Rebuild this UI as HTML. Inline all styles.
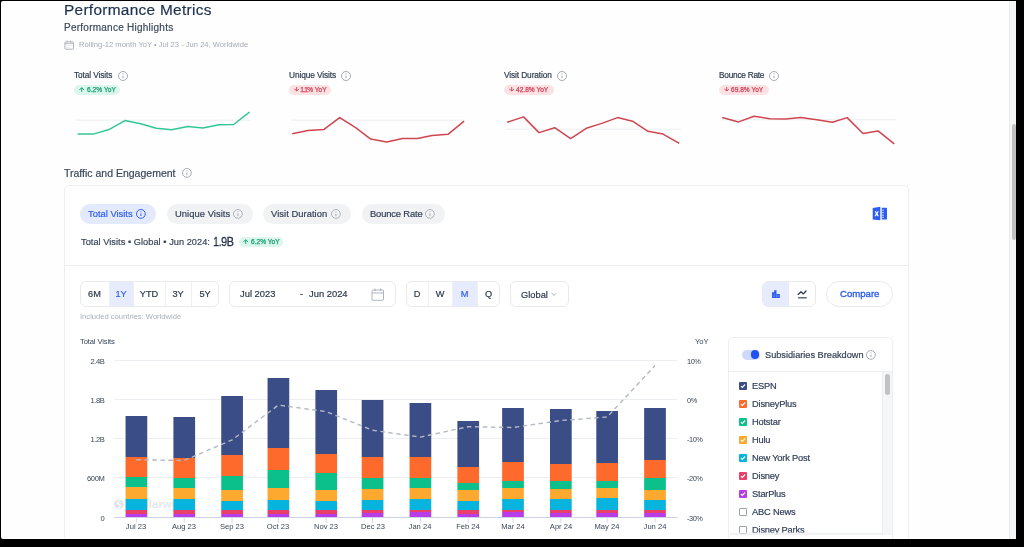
<!DOCTYPE html>
<html><head><meta charset="utf-8"><style>
html,body{margin:0;padding:0;width:1024px;height:547px;overflow:hidden;background:#000}
body{position:relative;font-family:"Liberation Sans", sans-serif}
.t{position:absolute;white-space:nowrap;font-family:"Liberation Sans", sans-serif;will-change:transform}
.r{position:absolute}
</style></head><body>
<div class="r" style="left:0.00px;top:0.00px;width:1024.00px;height:547.00px;background:#000"></div>
<div class="r" style="left:1.00px;top:1.00px;width:1015.00px;height:538.00px;background:#fefefe;border-radius:2px"></div>
<div class="r" style="left:1009.00px;top:1.00px;width:7.00px;height:538.00px;background:#f4f6f8;border-left:1px solid #e8ebee;box-sizing:border-box"></div>
<div class="r" style="left:1012.00px;top:124.00px;width:3.50px;height:116.00px;background:#c2c2c2;border-radius:2px"></div>
<div class="t" style="left:64.30px;top:-0.15px;font-size:15.4px;line-height:20.02px;color:#1d3050;font-weight:400;letter-spacing:0.3px;-webkit-text-stroke:0.2px currentColor;">Performance Metrics</div>
<div class="t" style="left:64.00px;top:20.73px;font-size:10px;line-height:13.00px;color:#3c4a5c;font-weight:400;letter-spacing:0.25px;-webkit-text-stroke:0.2px currentColor;">Performance Highlights</div>
<svg class="r" style="left:64.30px;top:39.60px" width="10" height="10" viewBox="0 0 10 10"><rect x="0.9" y="1.9" width="8.6" height="7.3" rx="0.5" fill="none" stroke="#a9b1ba" stroke-width="0.95"/><line x1="0.9" y1="3.6" x2="9.5" y2="3.6" stroke="#a9b1ba" stroke-width="0.8"/><line x1="3" y1="0.6" x2="3" y2="2.4" stroke="#a9b1ba" stroke-width="1"/><line x1="6.7" y1="0.6" x2="6.7" y2="2.4" stroke="#a9b1ba" stroke-width="1"/><g fill="#d5d9de"><rect x="2.5" y="5" width="1" height="1"/><rect x="4.5" y="5" width="1" height="1"/><rect x="6.5" y="5" width="1" height="1"/><rect x="2.5" y="7" width="1" height="1"/><rect x="4.5" y="7" width="1" height="1"/></g></svg>
<div class="t" style="left:79.30px;top:39.93px;font-size:7.6px;line-height:9.88px;color:#a3abb5;font-weight:400;letter-spacing:0px;">Rolling-12 month YoY • Jul 23 - Jun 24, Worldwide</div>
<div class="t" style="left:74.30px;top:69.83px;font-size:8.3px;line-height:10.79px;color:#2e3c4f;font-weight:400;letter-spacing:-0.1px;-webkit-text-stroke:0.2px currentColor;">Total Visits</div>
<svg class="r" style="left:117.00px;top:69.60px" width="12.0" height="12.0" viewBox="-6.0 -6.0 12.0 12.0"><circle cx="0" cy="0" r="4.5" fill="none" stroke="#9aa3ad" stroke-width="0.9"/><line x1="0" y1="-0.4" x2="0" y2="2.25" stroke="#9aa3ad" stroke-width="0.9"/><circle cx="0" cy="-2.16" r="0.55" fill="#9aa3ad"/></svg>
<div class="r" style="left:74.30px;top:84.50px;width:45.50px;height:10.20px;background:#dcf6ee;border-radius:5.1px"></div>
<svg class="r" style="left:79.00px;top:87.20px" width="5.4" height="4.8" viewBox="0 0 5.4 4.8"><line x1="2.7" y1="0.7" x2="2.7" y2="4.8" stroke="#139f72" stroke-width="0.95"/><polyline points="0.3,3.1 2.7,0.7 5.1,3.1" fill="none" stroke="#139f72" stroke-width="0.95"/></svg>
<div class="t" style="left:86.50px;top:86.02px;font-size:6.6px;line-height:8.58px;color:#139f72;font-weight:400;letter-spacing:0.05px;-webkit-text-stroke:0.25px currentColor;">6.2% YoY</div>
<div class="t" style="left:289.00px;top:69.83px;font-size:8.3px;line-height:10.79px;color:#2e3c4f;font-weight:400;letter-spacing:-0.1px;-webkit-text-stroke:0.2px currentColor;">Unique Visits</div>
<svg class="r" style="left:340.20px;top:69.60px" width="12.0" height="12.0" viewBox="-6.0 -6.0 12.0 12.0"><circle cx="0" cy="0" r="4.5" fill="none" stroke="#9aa3ad" stroke-width="0.9"/><line x1="0" y1="-0.4" x2="0" y2="2.25" stroke="#9aa3ad" stroke-width="0.9"/><circle cx="0" cy="-2.16" r="0.55" fill="#9aa3ad"/></svg>
<div class="r" style="left:289.00px;top:84.50px;width:42.00px;height:10.20px;background:#fde2e4;border-radius:5.1px"></div>
<svg class="r" style="left:293.70px;top:87.20px" width="5.4" height="4.8" viewBox="0 0 5.4 4.8"><line x1="2.7" y1="0" x2="2.7" y2="4.1" stroke="#d03f57" stroke-width="0.95"/><polyline points="0.3,1.6999999999999997 2.7,4.1 5.1,1.6999999999999997" fill="none" stroke="#d03f57" stroke-width="0.95"/></svg>
<div class="t" style="left:301.20px;top:86.02px;font-size:6.6px;line-height:8.58px;color:#d03f57;font-weight:400;letter-spacing:0px;-webkit-text-stroke:0.25px currentColor;"><span style="margin:0 -0.75px">1</span>.<span style="margin:0 -0.75px">1</span>% YoY</div>
<div class="t" style="left:504.00px;top:69.83px;font-size:8.3px;line-height:10.79px;color:#2e3c4f;font-weight:400;letter-spacing:-0.1px;-webkit-text-stroke:0.2px currentColor;">Visit Duration</div>
<svg class="r" style="left:556.20px;top:69.60px" width="12.0" height="12.0" viewBox="-6.0 -6.0 12.0 12.0"><circle cx="0" cy="0" r="4.5" fill="none" stroke="#9aa3ad" stroke-width="0.9"/><line x1="0" y1="-0.4" x2="0" y2="2.25" stroke="#9aa3ad" stroke-width="0.9"/><circle cx="0" cy="-2.16" r="0.55" fill="#9aa3ad"/></svg>
<div class="r" style="left:504.00px;top:84.50px;width:50.00px;height:10.20px;background:#fde2e4;border-radius:5.1px"></div>
<svg class="r" style="left:508.70px;top:87.20px" width="5.4" height="4.8" viewBox="0 0 5.4 4.8"><line x1="2.7" y1="0" x2="2.7" y2="4.1" stroke="#d03f57" stroke-width="0.95"/><polyline points="0.3,1.6999999999999997 2.7,4.1 5.1,1.6999999999999997" fill="none" stroke="#d03f57" stroke-width="0.95"/></svg>
<div class="t" style="left:516.20px;top:86.02px;font-size:6.6px;line-height:8.58px;color:#d03f57;font-weight:400;letter-spacing:0px;-webkit-text-stroke:0.25px currentColor;">42.8% YoY</div>
<div class="t" style="left:719.00px;top:69.83px;font-size:8.3px;line-height:10.79px;color:#2e3c4f;font-weight:400;letter-spacing:-0.25px;-webkit-text-stroke:0.2px currentColor;">Bounce Rate</div>
<svg class="r" style="left:768.00px;top:69.60px" width="12.0" height="12.0" viewBox="-6.0 -6.0 12.0 12.0"><circle cx="0" cy="0" r="4.5" fill="none" stroke="#9aa3ad" stroke-width="0.9"/><line x1="0" y1="-0.4" x2="0" y2="2.25" stroke="#9aa3ad" stroke-width="0.9"/><circle cx="0" cy="-2.16" r="0.55" fill="#9aa3ad"/></svg>
<div class="r" style="left:719.00px;top:84.50px;width:49.80px;height:10.20px;background:#fde2e4;border-radius:5.1px"></div>
<svg class="r" style="left:723.70px;top:87.20px" width="5.4" height="4.8" viewBox="0 0 5.4 4.8"><line x1="2.7" y1="0" x2="2.7" y2="4.1" stroke="#d03f57" stroke-width="0.95"/><polyline points="0.3,1.6999999999999997 2.7,4.1 5.1,1.6999999999999997" fill="none" stroke="#d03f57" stroke-width="0.95"/></svg>
<div class="t" style="left:731.20px;top:86.02px;font-size:6.6px;line-height:8.58px;color:#d03f57;font-weight:400;letter-spacing:0px;-webkit-text-stroke:0.25px currentColor;">69.8% YoY</div>
<svg class="r" style="left:0.00px;top:0.00px" width="1024" height="547" viewBox="0 0 1024 547"><line x1="76" y1="120.2" x2="250.8" y2="120.2" stroke="#eceef0" stroke-width="1"/><polyline fill="none" stroke="#33c697" stroke-width="1.5" stroke-linejoin="round" points="77.6,134.1 93.3,134.1 109.8,129.2 124.9,120.6 140.6,123.8 156.3,128.3 171.7,129.8 187.8,126.6 202.9,127.9 219,124.7 233.6,124.5 249.5,112.2"/><line x1="291.2" y1="120.2" x2="465.2" y2="120.2" stroke="#eceef0" stroke-width="1"/><polyline fill="none" stroke="#cf4650" stroke-width="1.5" stroke-linejoin="round" points="292.2,133.7 307.9,130.5 324.0,129.4 339.7,117.6 355.6,127.7 370.7,139.1 386.8,142.1 402.5,138.4 417.5,138.4 432.1,135.4 448.0,134.3 464.1,121.2"/><line x1="506.2" y1="129.2" x2="680.8" y2="129.2" stroke="#eceef0" stroke-width="1"/><polyline fill="none" stroke="#cf4650" stroke-width="1.5" stroke-linejoin="round" points="507.2,122.3 523.6,116.9 539.0,132.6 554.7,127.7 570.6,138.6 586.3,128.3 601.8,123.4 617.5,117.6 632.5,121.2 648.0,131.3 663.0,134.1 679.3,143.4"/><line x1="721.2" y1="119.7" x2="895.8" y2="119.7" stroke="#eceef0" stroke-width="1"/><polyline fill="none" stroke="#cf4650" stroke-width="1.5" stroke-linejoin="round" points="722.2,117.6 738.6,121.9 754.0,116.3 769.7,118.7 785.6,119.1 800.7,117.6 816.8,119.7 832.5,122.3 847.1,117.6 863.0,133.5 878.0,130.9 894.3,143.8"/></svg>
<div class="t" style="left:64.10px;top:166.84px;font-size:10.5px;line-height:13.65px;color:#3a4859;font-weight:400;letter-spacing:0px;-webkit-text-stroke:0.2px currentColor;">Traffic and Engagement</div>
<svg class="r" style="left:180.60px;top:167.00px" width="11.8" height="11.8" viewBox="-5.9 -5.9 11.8 11.8"><circle cx="0" cy="0" r="4.4" fill="none" stroke="#9aa3ad" stroke-width="0.9"/><line x1="0" y1="-0.4" x2="0" y2="2.20" stroke="#9aa3ad" stroke-width="0.9"/><circle cx="0" cy="-2.11" r="0.55" fill="#9aa3ad"/></svg>
<div class="r" style="left:64.00px;top:185.00px;width:845.00px;height:415.00px;border:1px solid #eceef1;border-radius:5px;background:#fff;box-sizing:border-box"></div>
<div class="r" style="left:65.00px;top:265.00px;width:843.00px;height:1.00px;background:#eceef1"></div>
<div class="r" style="left:80.00px;top:203.80px;width:76.00px;height:19.80px;background:#e4eafd;border-radius:10px"></div>
<div class="t" style="left:88.20px;top:207.93px;font-size:9.4px;line-height:12.22px;color:#2f5ef0;font-weight:400;letter-spacing:0px;-webkit-text-stroke:0.2px currentColor;">Total Visits</div>
<svg class="r" style="left:135.10px;top:208.30px" width="11.8" height="11.8" viewBox="-5.9 -5.9 11.8 11.8"><circle cx="0" cy="0" r="4.4" fill="none" stroke="#2f5ef0" stroke-width="1.0"/><line x1="0" y1="-0.4" x2="0" y2="2.20" stroke="#2f5ef0" stroke-width="1.0"/><circle cx="0" cy="-2.11" r="0.55" fill="#2f5ef0"/></svg>
<div class="r" style="left:166.70px;top:203.80px;width:86.30px;height:19.80px;background:#f1f2f4;border-radius:10px"></div>
<div class="t" style="left:174.50px;top:207.93px;font-size:9.4px;line-height:12.22px;color:#34425a;font-weight:400;letter-spacing:0.05px;-webkit-text-stroke:0.2px currentColor;">Unique Visits</div>
<svg class="r" style="left:232.10px;top:208.30px" width="11.8" height="11.8" viewBox="-5.9 -5.9 11.8 11.8"><circle cx="0" cy="0" r="4.4" fill="none" stroke="#a3abb4" stroke-width="0.9"/><line x1="0" y1="-0.4" x2="0" y2="2.20" stroke="#a3abb4" stroke-width="0.9"/><circle cx="0" cy="-2.11" r="0.55" fill="#a3abb4"/></svg>
<div class="r" style="left:263.40px;top:203.80px;width:87.90px;height:19.80px;background:#f1f2f4;border-radius:10px"></div>
<div class="t" style="left:271.20px;top:207.93px;font-size:9.4px;line-height:12.22px;color:#34425a;font-weight:400;letter-spacing:0.05px;-webkit-text-stroke:0.2px currentColor;">Visit Duration</div>
<svg class="r" style="left:330.40px;top:208.30px" width="11.8" height="11.8" viewBox="-5.9 -5.9 11.8 11.8"><circle cx="0" cy="0" r="4.4" fill="none" stroke="#a3abb4" stroke-width="0.9"/><line x1="0" y1="-0.4" x2="0" y2="2.20" stroke="#a3abb4" stroke-width="0.9"/><circle cx="0" cy="-2.11" r="0.55" fill="#a3abb4"/></svg>
<div class="r" style="left:362.30px;top:203.80px;width:82.50px;height:19.80px;background:#f1f2f4;border-radius:10px"></div>
<div class="t" style="left:369.80px;top:207.93px;font-size:9.4px;line-height:12.22px;color:#34425a;font-weight:400;letter-spacing:-0.15px;-webkit-text-stroke:0.2px currentColor;">Bounce Rate</div>
<svg class="r" style="left:423.90px;top:208.30px" width="11.8" height="11.8" viewBox="-5.9 -5.9 11.8 11.8"><circle cx="0" cy="0" r="4.4" fill="none" stroke="#a3abb4" stroke-width="0.9"/><line x1="0" y1="-0.4" x2="0" y2="2.20" stroke="#a3abb4" stroke-width="0.9"/><circle cx="0" cy="-2.11" r="0.55" fill="#a3abb4"/></svg>
<svg class="r" style="left:872.00px;top:206.00px" width="16" height="15" viewBox="0 0 16 15"><path d="M0.7 1.9 L8.3 0.8 L8.3 14.2 L0.7 13.4 Z" fill="#2c5cf0"/><path d="M9.7 1.8 L14.2 1.8 Q15 1.8 15 2.6 L15 12.8 Q15 13.6 14.2 13.6 L9.7 13.6 Z" fill="#2c5cf0"/><path d="M2.6 5.2 L4.0 5.2 L4.7 6.7 L5.4 5.2 L6.8 5.2 L5.5 7.7 L6.9 10.2 L5.5 10.2 L4.7 8.7 L3.9 10.2 L2.5 10.2 L3.9 7.7 Z" fill="#fff"/><g stroke="#fff" stroke-width="0.7"><line x1="9.7" y1="4.2" x2="12" y2="4.2"/><line x1="9.7" y1="6.6" x2="12" y2="6.6"/><line x1="9.7" y1="9.2" x2="12" y2="9.2"/><line x1="9.7" y1="11.3" x2="12" y2="11.3"/></g></svg>
<div class="t" style="left:80.50px;top:237.43px;font-size:9.2px;line-height:11.96px;color:#3a475a;font-weight:400;letter-spacing:0.05px;-webkit-text-stroke:0.2px currentColor;">Total Visits • Global • Jun 2024:</div>
<div class="t" style="left:213.20px;top:234.25px;font-size:13px;line-height:16.90px;color:#222f45;font-weight:400;letter-spacing:-0.5px;-webkit-text-stroke:0.3px currentColor;transform:scaleX(0.83);transform-origin:0 0;">1.9B</div>
<div class="r" style="left:238.60px;top:236.80px;width:44.90px;height:10.50px;background:#dcf6ee;border-radius:5.2px"></div>
<svg class="r" style="left:242.80px;top:239.40px" width="5.4" height="5.0" viewBox="0 0 5.4 5.0"><line x1="2.7" y1="0.7" x2="2.7" y2="5.0" stroke="#139f72" stroke-width="0.95"/><polyline points="0.3,3.1 2.7,0.7 5.1,3.1" fill="none" stroke="#139f72" stroke-width="0.95"/></svg>
<div class="t" style="left:250.80px;top:238.42px;font-size:6.6px;line-height:8.58px;color:#139f72;font-weight:400;letter-spacing:0px;-webkit-text-stroke:0.25px currentColor;">6.2% YoY</div>
<div class="r" style="left:80.00px;top:281.00px;width:139.00px;height:26.00px;border:1px solid #e8eaed;border-radius:6px;background:#fff;box-sizing:border-box"></div>
<div class="r" style="left:109.00px;top:282.00px;width:24.00px;height:24.00px;background:#e6ecfd"></div>
<div class="r" style="left:109.00px;top:282.00px;width:1.00px;height:24.00px;background:#eef0f2"></div>
<div class="r" style="left:133.00px;top:282.00px;width:1.00px;height:24.00px;background:#eef0f2"></div>
<div class="r" style="left:165.00px;top:282.00px;width:1.00px;height:24.00px;background:#eef0f2"></div>
<div class="r" style="left:191.00px;top:282.00px;width:1.00px;height:24.00px;background:#eef0f2"></div>
<div class="t" style="left:80.00px;top:289.13px;width:29.00px;text-align:center;font-size:9.2px;line-height:11.96px;color:#2d3a4d;font-weight:400;letter-spacing:0px;-webkit-text-stroke:0.2px currentColor;">6M</div>
<div class="t" style="left:109.00px;top:289.13px;width:24.00px;text-align:center;font-size:9.2px;line-height:11.96px;color:#2f5ef0;font-weight:400;letter-spacing:0px;-webkit-text-stroke:0.2px currentColor;">1Y</div>
<div class="t" style="left:133.00px;top:289.13px;width:32.00px;text-align:center;font-size:9.2px;line-height:11.96px;color:#2d3a4d;font-weight:400;letter-spacing:0px;-webkit-text-stroke:0.2px currentColor;">YTD</div>
<div class="t" style="left:165.00px;top:289.13px;width:26.00px;text-align:center;font-size:9.2px;line-height:11.96px;color:#2d3a4d;font-weight:400;letter-spacing:0px;-webkit-text-stroke:0.2px currentColor;">3Y</div>
<div class="t" style="left:191.00px;top:289.13px;width:28.00px;text-align:center;font-size:9.2px;line-height:11.96px;color:#2d3a4d;font-weight:400;letter-spacing:0px;-webkit-text-stroke:0.2px currentColor;">5Y</div>
<div class="r" style="left:229.00px;top:281.00px;width:167.00px;height:26.00px;border:1px solid #e8eaed;border-radius:6px;background:#fff;box-sizing:border-box"></div>
<div class="t" style="left:239.60px;top:288.23px;font-size:9.4px;line-height:12.22px;color:#2d3a4d;font-weight:400;letter-spacing:0px;-webkit-text-stroke:0.2px currentColor;">Jul 2023</div>
<div class="t" style="left:299.50px;top:288.23px;font-size:9.4px;line-height:12.22px;color:#2d3a4d;font-weight:400;letter-spacing:0px;-webkit-text-stroke:0.2px currentColor;">-</div>
<div class="t" style="left:309.00px;top:288.23px;font-size:9.4px;line-height:12.22px;color:#2d3a4d;font-weight:400;letter-spacing:0px;-webkit-text-stroke:0.2px currentColor;">Jun 2024</div>
<svg class="r" style="left:370.50px;top:287.80px" width="14" height="14" viewBox="0 0 14 14"><rect x="1" y="2" width="11.5" height="10.3" rx="1" fill="none" stroke="#a5adb6" stroke-width="0.9"/><line x1="1" y1="5" x2="12.5" y2="5" stroke="#a5adb6" stroke-width="0.9"/><line x1="4" y1="0.5" x2="4" y2="3" stroke="#a5adb6" stroke-width="0.9"/><line x1="9.5" y1="0.5" x2="9.5" y2="3" stroke="#a5adb6" stroke-width="0.9"/></svg>
<div class="r" style="left:406.00px;top:281.00px;width:94.00px;height:26.00px;border:1px solid #e8eaed;border-radius:6px;background:#fff;box-sizing:border-box"></div>
<div class="r" style="left:428.00px;top:282.00px;width:1.00px;height:24.00px;background:#eef0f2"></div>
<div class="r" style="left:452.00px;top:282.00px;width:25.00px;height:24.00px;background:#e6ecfd"></div>
<div class="r" style="left:452.00px;top:282.00px;width:1.00px;height:24.00px;background:#eef0f2"></div>
<div class="r" style="left:477.00px;top:282.00px;width:1.00px;height:24.00px;background:#eef0f2"></div>
<div class="t" style="left:406.00px;top:289.13px;width:22.00px;text-align:center;font-size:9.2px;line-height:11.96px;color:#2d3a4d;font-weight:400;letter-spacing:0px;-webkit-text-stroke:0.2px currentColor;">D</div>
<div class="t" style="left:428.00px;top:289.13px;width:24.00px;text-align:center;font-size:9.2px;line-height:11.96px;color:#2d3a4d;font-weight:400;letter-spacing:0px;-webkit-text-stroke:0.2px currentColor;">W</div>
<div class="t" style="left:452.00px;top:289.13px;width:25.00px;text-align:center;font-size:9.2px;line-height:11.96px;color:#2f5ef0;font-weight:400;letter-spacing:0px;-webkit-text-stroke:0.2px currentColor;">M</div>
<div class="t" style="left:477.00px;top:289.13px;width:23.00px;text-align:center;font-size:9.2px;line-height:11.96px;color:#2d3a4d;font-weight:400;letter-spacing:0px;-webkit-text-stroke:0.2px currentColor;">Q</div>
<div class="r" style="left:510.00px;top:281.00px;width:59.00px;height:26.00px;border:1px solid #e8eaed;border-radius:6px;background:#fff;box-sizing:border-box"></div>
<div class="t" style="left:520.80px;top:288.73px;font-size:9.3px;line-height:12.09px;color:#2d3a4d;font-weight:400;letter-spacing:0px;-webkit-text-stroke:0.2px currentColor;">Global</div>
<svg class="r" style="left:551.00px;top:292.00px" width="6" height="5" viewBox="0 0 6 5"><polyline points="0.8,1.2 3,3.4 5.2,1.2" fill="none" stroke="#9aa3ad" stroke-width="0.9"/></svg>
<div class="r" style="left:762.00px;top:281.00px;width:54.00px;height:26.00px;border:1px solid #e8eaed;border-radius:6px;background:#fff;box-sizing:border-box"></div>
<div class="r" style="left:763.00px;top:282.00px;width:26.00px;height:24.00px;background:#e6ecfd;border-radius:5px 0 0 5px"></div>
<svg class="r" style="left:771.00px;top:289.00px" width="10" height="10" viewBox="0 0 10 10"><path d="M1 3.3 L3.1 3.3 L3.1 1.2 L5.5 1.2 L5.5 4.9 L8.9 4.9 L8.9 8.9 L1 8.9 Z" fill="#2f5ef0"/><g stroke="#9db3f8" stroke-width="0.5"><line x1="3.1" y1="5" x2="3.1" y2="8.3"/><line x1="5.5" y1="5.5" x2="5.5" y2="8.3"/><line x1="7.2" y1="6" x2="7.2" y2="8.3"/></g></svg>
<svg class="r" style="left:797.00px;top:289.00px" width="11" height="10" viewBox="0 0 11 10"><polyline points="1.1,5.4 4,2.8 6.4,4.9 9,2" fill="none" stroke="#2d3a4d" stroke-width="1.3" stroke-linecap="round" stroke-linejoin="round"/><line x1="1.1" y1="8.8" x2="9.8" y2="8.8" stroke="#4a5566" stroke-width="1.3"/></svg>
<div class="r" style="left:826.00px;top:281.00px;width:67.00px;height:26.00px;border:1px solid #e8eaed;border-radius:13px;background:#fff;box-sizing:border-box"></div>
<div class="t" style="left:839.70px;top:288.23px;font-size:9.6px;line-height:12.48px;color:#2f5ef0;font-weight:400;letter-spacing:0px;-webkit-text-stroke:0.35px currentColor;">Compare</div>
<div class="t" style="left:80.00px;top:312.13px;font-size:7.6px;line-height:9.88px;color:#aab1ba;font-weight:400;letter-spacing:0px;">Included countries: Worldwide</div>
<div class="t" style="left:80.30px;top:336.73px;font-size:7.6px;line-height:9.88px;color:#3a475a;font-weight:400;letter-spacing:-0.12px;">Total Visits</div>
<div class="t" style="left:695.20px;top:337.03px;font-size:7.6px;line-height:9.88px;color:#3a475a;font-weight:400;letter-spacing:0px;">YoY</div>
<svg class="r" style="left:0.00px;top:0.00px" width="1024" height="547" viewBox="0 0 1024 547"><line x1="114" y1="360.5" x2="677.5" y2="360.5" stroke="#eceef1" stroke-width="1"/><line x1="114" y1="399.5" x2="677.5" y2="399.5" stroke="#eceef1" stroke-width="1"/><line x1="114" y1="438.5" x2="677.5" y2="438.5" stroke="#eceef1" stroke-width="1"/><line x1="114" y1="477.5" x2="677.5" y2="477.5" stroke="#eceef1" stroke-width="1"/></svg>
<div class="t" style="left:60.00px;top:356.53px;width:44.30px;text-align:right;font-size:7.6px;line-height:9.88px;color:#3a475a;font-weight:400;letter-spacing:-0.45px;">2.4B</div>
<div class="t" style="left:686.80px;top:357.03px;font-size:7.4px;line-height:9.62px;color:#3a475a;font-weight:400;letter-spacing:-0.45px;">10%</div>
<div class="t" style="left:60.00px;top:395.53px;width:44.30px;text-align:right;font-size:7.6px;line-height:9.88px;color:#3a475a;font-weight:400;letter-spacing:-0.45px;">1.8B</div>
<div class="t" style="left:686.80px;top:396.03px;font-size:7.4px;line-height:9.62px;color:#3a475a;font-weight:400;letter-spacing:-0.45px;">0%</div>
<div class="t" style="left:60.00px;top:434.53px;width:44.30px;text-align:right;font-size:7.6px;line-height:9.88px;color:#3a475a;font-weight:400;letter-spacing:-0.45px;">1.2B</div>
<div class="t" style="left:686.80px;top:435.03px;font-size:7.4px;line-height:9.62px;color:#3a475a;font-weight:400;letter-spacing:-0.45px;">-10%</div>
<div class="t" style="left:60.00px;top:473.53px;width:44.30px;text-align:right;font-size:7.6px;line-height:9.88px;color:#3a475a;font-weight:400;letter-spacing:-0.45px;">600M</div>
<div class="t" style="left:686.80px;top:474.03px;font-size:7.4px;line-height:9.62px;color:#3a475a;font-weight:400;letter-spacing:-0.45px;">-20%</div>
<div class="t" style="left:60.00px;top:513.53px;width:44.30px;text-align:right;font-size:7.6px;line-height:9.88px;color:#3a475a;font-weight:400;letter-spacing:-0.45px;">0</div>
<div class="t" style="left:686.80px;top:514.03px;font-size:7.4px;line-height:9.62px;color:#3a475a;font-weight:400;letter-spacing:-0.45px;">-30%</div>
<svg class="r" style="left:0.00px;top:0.00px" width="1024" height="547" viewBox="0 0 1024 547"><circle cx="118.9" cy="504.1" r="4.9" fill="#e3e5e9"/><path d="M120.6 500.2 C117.2 500.2 116.4 503.2 119 504.2 C121.4 505.1 120.6 507.8 117.2 508" fill="none" stroke="#fdfdfd" stroke-width="1.1"/><text x="125.8" y="507.8" font-family="Liberation Sans" font-size="11.5" font-weight="700" fill="#e5e7eb">similarweb</text><rect x="125.55" y="416" width="21.7" height="41" fill="#3b4d86"/><rect x="125.55" y="457" width="21.7" height="20" fill="#fd6a2b"/><rect x="125.55" y="477" width="21.7" height="10" fill="#0cc08c"/><rect x="125.55" y="487" width="21.7" height="12" fill="#fda82e"/><rect x="125.55" y="499" width="21.7" height="11" fill="#06b4dd"/><rect x="125.55" y="510" width="21.7" height="4" fill="#e8406b"/><rect x="125.55" y="514" width="21.7" height="3" fill="#b83de8"/><line x1="136.40" y1="517" x2="136.40" y2="522.8" stroke="#d5dae8" stroke-width="1"/><rect x="173.40" y="417" width="21.7" height="41" fill="#3b4d86"/><rect x="173.40" y="458" width="21.7" height="20" fill="#fd6a2b"/><rect x="173.40" y="478" width="21.7" height="10" fill="#0cc08c"/><rect x="173.40" y="488" width="21.7" height="11" fill="#fda82e"/><rect x="173.40" y="499" width="21.7" height="11" fill="#06b4dd"/><rect x="173.40" y="510" width="21.7" height="4" fill="#e8406b"/><rect x="173.40" y="514" width="21.7" height="3" fill="#b83de8"/><line x1="184.25" y1="517" x2="184.25" y2="522.8" stroke="#d5dae8" stroke-width="1"/><rect x="221.24" y="396" width="21.7" height="59" fill="#3b4d86"/><rect x="221.24" y="455" width="21.7" height="21" fill="#fd6a2b"/><rect x="221.24" y="476" width="21.7" height="14" fill="#0cc08c"/><rect x="221.24" y="490" width="21.7" height="11" fill="#fda82e"/><rect x="221.24" y="501" width="21.7" height="9" fill="#06b4dd"/><rect x="221.24" y="510" width="21.7" height="4" fill="#e8406b"/><rect x="221.24" y="514" width="21.7" height="3" fill="#b83de8"/><line x1="232.09" y1="517" x2="232.09" y2="522.8" stroke="#d5dae8" stroke-width="1"/><rect x="267.55" y="378" width="21.7" height="70" fill="#3b4d86"/><rect x="267.55" y="448" width="21.7" height="22" fill="#fd6a2b"/><rect x="267.55" y="470" width="21.7" height="18" fill="#0cc08c"/><rect x="267.55" y="488" width="21.7" height="12" fill="#fda82e"/><rect x="267.55" y="500" width="21.7" height="10" fill="#06b4dd"/><rect x="267.55" y="510" width="21.7" height="4" fill="#e8406b"/><rect x="267.55" y="514" width="21.7" height="3" fill="#b83de8"/><line x1="278.40" y1="517" x2="278.40" y2="522.8" stroke="#d5dae8" stroke-width="1"/><rect x="315.39" y="390" width="21.7" height="64" fill="#3b4d86"/><rect x="315.39" y="454" width="21.7" height="19" fill="#fd6a2b"/><rect x="315.39" y="473" width="21.7" height="17" fill="#0cc08c"/><rect x="315.39" y="490" width="21.7" height="11" fill="#fda82e"/><rect x="315.39" y="501" width="21.7" height="9" fill="#06b4dd"/><rect x="315.39" y="510" width="21.7" height="4" fill="#e8406b"/><rect x="315.39" y="514" width="21.7" height="3" fill="#b83de8"/><line x1="326.24" y1="517" x2="326.24" y2="522.8" stroke="#d5dae8" stroke-width="1"/><rect x="361.70" y="400" width="21.7" height="57" fill="#3b4d86"/><rect x="361.70" y="457" width="21.7" height="21" fill="#fd6a2b"/><rect x="361.70" y="478" width="21.7" height="11" fill="#0cc08c"/><rect x="361.70" y="489" width="21.7" height="11" fill="#fda82e"/><rect x="361.70" y="500" width="21.7" height="10" fill="#06b4dd"/><rect x="361.70" y="510" width="21.7" height="3" fill="#e8406b"/><rect x="361.70" y="513" width="21.7" height="4" fill="#b83de8"/><line x1="372.55" y1="517" x2="372.55" y2="522.8" stroke="#d5dae8" stroke-width="1"/><rect x="409.55" y="403" width="21.7" height="54" fill="#3b4d86"/><rect x="409.55" y="457" width="21.7" height="21" fill="#fd6a2b"/><rect x="409.55" y="478" width="21.7" height="10" fill="#0cc08c"/><rect x="409.55" y="488" width="21.7" height="11" fill="#fda82e"/><rect x="409.55" y="499" width="21.7" height="11" fill="#06b4dd"/><rect x="409.55" y="510" width="21.7" height="2" fill="#e8406b"/><rect x="409.55" y="512" width="21.7" height="5" fill="#b83de8"/><line x1="420.40" y1="517" x2="420.40" y2="522.8" stroke="#d5dae8" stroke-width="1"/><rect x="457.39" y="421" width="21.7" height="46" fill="#3b4d86"/><rect x="457.39" y="467" width="21.7" height="16" fill="#fd6a2b"/><rect x="457.39" y="483" width="21.7" height="7" fill="#0cc08c"/><rect x="457.39" y="490" width="21.7" height="11" fill="#fda82e"/><rect x="457.39" y="501" width="21.7" height="9" fill="#06b4dd"/><rect x="457.39" y="510" width="21.7" height="4" fill="#e8406b"/><rect x="457.39" y="514" width="21.7" height="3" fill="#b83de8"/><line x1="468.24" y1="517" x2="468.24" y2="522.8" stroke="#d5dae8" stroke-width="1"/><rect x="502.15" y="408" width="21.7" height="54" fill="#3b4d86"/><rect x="502.15" y="462" width="21.7" height="19" fill="#fd6a2b"/><rect x="502.15" y="481" width="21.7" height="7" fill="#0cc08c"/><rect x="502.15" y="488" width="21.7" height="11" fill="#fda82e"/><rect x="502.15" y="499" width="21.7" height="11" fill="#06b4dd"/><rect x="502.15" y="510" width="21.7" height="2" fill="#e8406b"/><rect x="502.15" y="512" width="21.7" height="5" fill="#b83de8"/><line x1="513.00" y1="517" x2="513.00" y2="522.8" stroke="#d5dae8" stroke-width="1"/><rect x="550.00" y="409" width="21.7" height="55" fill="#3b4d86"/><rect x="550.00" y="464" width="21.7" height="17" fill="#fd6a2b"/><rect x="550.00" y="481" width="21.7" height="8" fill="#0cc08c"/><rect x="550.00" y="489" width="21.7" height="10" fill="#fda82e"/><rect x="550.00" y="499" width="21.7" height="11" fill="#06b4dd"/><rect x="550.00" y="510" width="21.7" height="3" fill="#e8406b"/><rect x="550.00" y="513" width="21.7" height="4" fill="#b83de8"/><line x1="560.85" y1="517" x2="560.85" y2="522.8" stroke="#d5dae8" stroke-width="1"/><rect x="596.30" y="411" width="21.7" height="52" fill="#3b4d86"/><rect x="596.30" y="463" width="21.7" height="18" fill="#fd6a2b"/><rect x="596.30" y="481" width="21.7" height="7" fill="#0cc08c"/><rect x="596.30" y="488" width="21.7" height="10" fill="#fda82e"/><rect x="596.30" y="498" width="21.7" height="12" fill="#06b4dd"/><rect x="596.30" y="510" width="21.7" height="3" fill="#e8406b"/><rect x="596.30" y="513" width="21.7" height="4" fill="#b83de8"/><line x1="607.15" y1="517" x2="607.15" y2="522.8" stroke="#d5dae8" stroke-width="1"/><rect x="644.15" y="408" width="21.7" height="52" fill="#3b4d86"/><rect x="644.15" y="460" width="21.7" height="18" fill="#fd6a2b"/><rect x="644.15" y="478" width="21.7" height="12" fill="#0cc08c"/><rect x="644.15" y="490" width="21.7" height="10" fill="#fda82e"/><rect x="644.15" y="500" width="21.7" height="10" fill="#06b4dd"/><rect x="644.15" y="510" width="21.7" height="3" fill="#e8406b"/><rect x="644.15" y="513" width="21.7" height="4" fill="#b83de8"/><line x1="655.00" y1="517" x2="655.00" y2="522.8" stroke="#d5dae8" stroke-width="1"/><line x1="114" y1="517.5" x2="677.5" y2="517.5" stroke="#cdd3e6" stroke-width="1"/><polyline fill="none" stroke="#b3b9c1" stroke-width="1.4" stroke-dasharray="4.5,3.5" points="136.4,459.7 184.24702380952382,460.5 232.09404761904761,439.9 278.39761904761906,405.1 326.2446428571429,411.6 372.54821428571427,430.3 420.39523809523814,437.1 468.2422619047619,426.7 513.002380952381,427.5 560.8494047619048,420.5 607.1529761904762,417.0 655.0,365.6"/></svg>
<div class="t" style="left:111.40px;top:521.73px;width:50.00px;text-align:center;font-size:7.6px;line-height:9.88px;color:#3a475a;font-weight:400;letter-spacing:0px;">Jul 23</div>
<div class="t" style="left:159.25px;top:521.73px;width:50.00px;text-align:center;font-size:7.6px;line-height:9.88px;color:#3a475a;font-weight:400;letter-spacing:0px;">Aug 23</div>
<div class="t" style="left:207.09px;top:521.73px;width:50.00px;text-align:center;font-size:7.6px;line-height:9.88px;color:#3a475a;font-weight:400;letter-spacing:0px;">Sep 23</div>
<div class="t" style="left:253.40px;top:521.73px;width:50.00px;text-align:center;font-size:7.6px;line-height:9.88px;color:#3a475a;font-weight:400;letter-spacing:0px;">Oct 23</div>
<div class="t" style="left:301.24px;top:521.73px;width:50.00px;text-align:center;font-size:7.6px;line-height:9.88px;color:#3a475a;font-weight:400;letter-spacing:0px;">Nov 23</div>
<div class="t" style="left:347.55px;top:521.73px;width:50.00px;text-align:center;font-size:7.6px;line-height:9.88px;color:#3a475a;font-weight:400;letter-spacing:0px;">Dec 23</div>
<div class="t" style="left:395.40px;top:521.73px;width:50.00px;text-align:center;font-size:7.6px;line-height:9.88px;color:#3a475a;font-weight:400;letter-spacing:0px;">Jan 24</div>
<div class="t" style="left:443.24px;top:521.73px;width:50.00px;text-align:center;font-size:7.6px;line-height:9.88px;color:#3a475a;font-weight:400;letter-spacing:0px;">Feb 24</div>
<div class="t" style="left:488.00px;top:521.73px;width:50.00px;text-align:center;font-size:7.6px;line-height:9.88px;color:#3a475a;font-weight:400;letter-spacing:0px;">Mar 24</div>
<div class="t" style="left:535.85px;top:521.73px;width:50.00px;text-align:center;font-size:7.6px;line-height:9.88px;color:#3a475a;font-weight:400;letter-spacing:0px;">Apr 24</div>
<div class="t" style="left:582.15px;top:521.73px;width:50.00px;text-align:center;font-size:7.6px;line-height:9.88px;color:#3a475a;font-weight:400;letter-spacing:0px;">May 24</div>
<div class="t" style="left:630.00px;top:521.73px;width:50.00px;text-align:center;font-size:7.6px;line-height:9.88px;color:#3a475a;font-weight:400;letter-spacing:0px;">Jun 24</div>
<div class="r" style="left:728.00px;top:337.00px;width:165.00px;height:263.00px;border:1px solid #eceef1;border-radius:5px;background:#fff;box-sizing:border-box"></div>
<div class="r" style="left:729.00px;top:371.00px;width:163.00px;height:1.00px;background:#eceef1"></div>
<div class="r" style="left:742.00px;top:349.90px;width:17.50px;height:9.90px;background:#cfd9fb;border-radius:5px"></div>
<div class="r" style="left:750.60px;top:350.40px;width:8.60px;height:8.60px;border-radius:50%;background:#2152f2"></div>
<div class="t" style="left:764.90px;top:349.73px;font-size:9.2px;line-height:11.96px;color:#34425a;font-weight:400;letter-spacing:0px;-webkit-text-stroke:0.2px currentColor;">Subsidiaries Breakdown</div>
<svg class="r" style="left:864.90px;top:348.70px" width="11.8" height="11.8" viewBox="-5.9 -5.9 11.8 11.8"><circle cx="0" cy="0" r="4.4" fill="none" stroke="#9aa3ad" stroke-width="0.9"/><line x1="0" y1="-0.4" x2="0" y2="2.20" stroke="#9aa3ad" stroke-width="0.9"/><circle cx="0" cy="-2.11" r="0.55" fill="#9aa3ad"/></svg>
<div class="r" style="left:882.00px;top:372.00px;width:10.00px;height:228.00px;background:#f5f6f8;border-left:1px solid #eceef1;box-sizing:border-box"></div>
<div class="r" style="left:885.10px;top:374.00px;width:4.70px;height:21.20px;background:#c2c2c2;border-radius:2.5px"></div>
<svg class="r" style="left:739.40px;top:382.30px" width="8" height="8" viewBox="0 0 8 8"><rect x="0" y="0" width="8" height="8" rx="1" fill="#3b4d86"/><polyline points="1.9,4.1 3.3,5.5 6.1,2.5" fill="none" stroke="#fff" stroke-width="1.1"/></svg>
<div class="t" style="left:752.30px;top:380.43px;font-size:9.3px;line-height:12.09px;color:#34425a;font-weight:400;letter-spacing:-0.2px;-webkit-text-stroke:0.2px currentColor;">ESPN</div>
<svg class="r" style="left:739.40px;top:400.20px" width="8" height="8" viewBox="0 0 8 8"><rect x="0" y="0" width="8" height="8" rx="1" fill="#fd6a2b"/><polyline points="1.9,4.1 3.3,5.5 6.1,2.5" fill="none" stroke="#fff" stroke-width="1.1"/></svg>
<div class="t" style="left:752.30px;top:398.33px;font-size:9.3px;line-height:12.09px;color:#34425a;font-weight:400;letter-spacing:-0.2px;-webkit-text-stroke:0.2px currentColor;">DisneyPlus</div>
<svg class="r" style="left:739.40px;top:418.10px" width="8" height="8" viewBox="0 0 8 8"><rect x="0" y="0" width="8" height="8" rx="1" fill="#0cc08c"/><polyline points="1.9,4.1 3.3,5.5 6.1,2.5" fill="none" stroke="#fff" stroke-width="1.1"/></svg>
<div class="t" style="left:752.30px;top:416.23px;font-size:9.3px;line-height:12.09px;color:#34425a;font-weight:400;letter-spacing:-0.2px;-webkit-text-stroke:0.2px currentColor;">Hotstar</div>
<svg class="r" style="left:739.40px;top:436.00px" width="8" height="8" viewBox="0 0 8 8"><rect x="0" y="0" width="8" height="8" rx="1" fill="#fda82e"/><polyline points="1.9,4.1 3.3,5.5 6.1,2.5" fill="none" stroke="#fff" stroke-width="1.1"/></svg>
<div class="t" style="left:752.30px;top:434.13px;font-size:9.3px;line-height:12.09px;color:#34425a;font-weight:400;letter-spacing:-0.2px;-webkit-text-stroke:0.2px currentColor;">Hulu</div>
<svg class="r" style="left:739.40px;top:453.90px" width="8" height="8" viewBox="0 0 8 8"><rect x="0" y="0" width="8" height="8" rx="1" fill="#06b4dd"/><polyline points="1.9,4.1 3.3,5.5 6.1,2.5" fill="none" stroke="#fff" stroke-width="1.1"/></svg>
<div class="t" style="left:752.30px;top:452.03px;font-size:9.3px;line-height:12.09px;color:#34425a;font-weight:400;letter-spacing:-0.2px;-webkit-text-stroke:0.2px currentColor;">New York Post</div>
<svg class="r" style="left:739.40px;top:471.80px" width="8" height="8" viewBox="0 0 8 8"><rect x="0" y="0" width="8" height="8" rx="1" fill="#e8406b"/><polyline points="1.9,4.1 3.3,5.5 6.1,2.5" fill="none" stroke="#fff" stroke-width="1.1"/></svg>
<div class="t" style="left:752.30px;top:469.93px;font-size:9.3px;line-height:12.09px;color:#34425a;font-weight:400;letter-spacing:-0.2px;-webkit-text-stroke:0.2px currentColor;">Disney</div>
<svg class="r" style="left:739.40px;top:489.70px" width="8" height="8" viewBox="0 0 8 8"><rect x="0" y="0" width="8" height="8" rx="1" fill="#b83de8"/><polyline points="1.9,4.1 3.3,5.5 6.1,2.5" fill="none" stroke="#fff" stroke-width="1.1"/></svg>
<div class="t" style="left:752.30px;top:487.83px;font-size:9.3px;line-height:12.09px;color:#34425a;font-weight:400;letter-spacing:-0.2px;-webkit-text-stroke:0.2px currentColor;">StarPlus</div>
<div class="r" style="left:739.40px;top:507.60px;width:8.00px;height:8.00px;border:1px solid #9aa3ad;border-radius:1px;box-sizing:border-box"></div>
<div class="t" style="left:752.30px;top:505.73px;font-size:9.3px;line-height:12.09px;color:#34425a;font-weight:400;letter-spacing:-0.2px;-webkit-text-stroke:0.2px currentColor;">ABC News</div>
<div class="r" style="left:739.40px;top:525.50px;width:8.00px;height:8.00px;border:1px solid #9aa3ad;border-radius:1px;box-sizing:border-box"></div>
<div class="t" style="left:752.30px;top:523.63px;font-size:9.3px;line-height:12.09px;color:#34425a;font-weight:400;letter-spacing:-0.2px;-webkit-text-stroke:0.2px currentColor;">Disney Parks</div>
<div class="r" style="left:729.50px;top:531.50px;width:152.70px;height:3.80px;background:linear-gradient(rgba(240,242,244,0.3),#eceef1)"></div>
<div class="r" style="left:729.50px;top:535.30px;width:162.00px;height:3.70px;background:#fff"></div>
<div class="r" style="left:0.00px;top:539.00px;width:1024.00px;height:8.00px;background:#000"></div>
<div class="r" style="left:1016.00px;top:0.00px;width:8.00px;height:547.00px;background:#000"></div>
</body></html>
